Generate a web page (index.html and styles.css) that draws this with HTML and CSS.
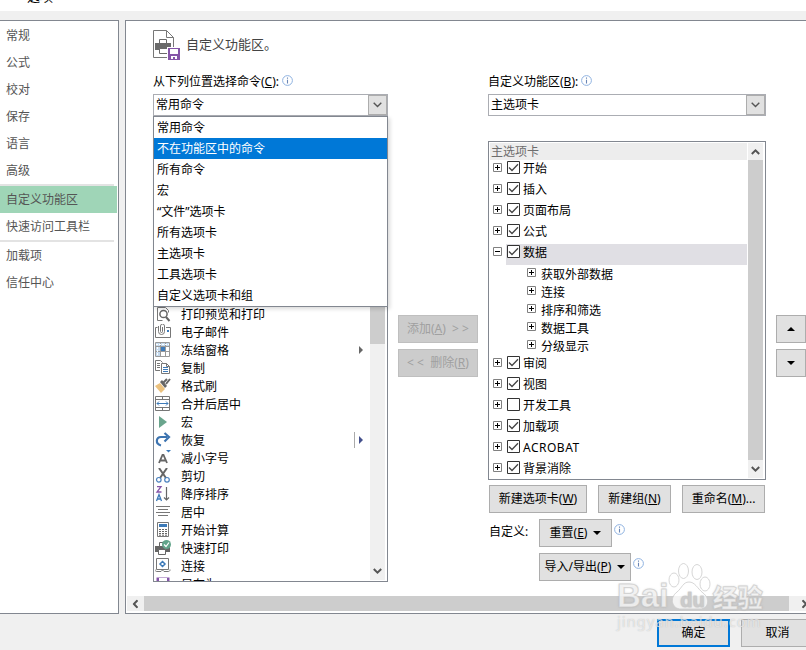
FILE: index.html
```html
<!DOCTYPE html>
<html lang="zh-CN">
<head>
    <meta charset="UTF-8">
    <title>Excel 选项</title>
    <link rel="stylesheet" href="styles.css">
</head>
<body>

    <!-- Shared symbols -->
    <svg class="symbols">
        <symbol id="info" viewBox="0 0 11 11">
            <circle cx="5.5" cy="5.5" r="4.9" fill="#fff" stroke="#8fb2e0"/>
            <path d="M5.5 2.5v1.2M5.5 4.7v3.8" stroke="#6a86b5" stroke-width="1.1"/>
        </symbol>
        <symbol id="chevron" viewBox="0 0 9 6">
            <path d="M.7.8l3.8 3.8L8.3.8" fill="none" stroke="#555" stroke-width="1.4"/>
        </symbol>
        <symbol id="scroll-arrow" viewBox="0 0 9 6">
            <path d="M.8 1l3.7 3.6L8.2 1" fill="none" stroke="#555" stroke-width="2"/>
        </symbol>
        <symbol id="plus" viewBox="0 0 9 9">
            <path d="M.5.5h8v8h-8z" fill="#fff" stroke="#808080"/>
            <path d="M2 4.5h5M4.5 2v5" stroke="#000"/>
        </symbol>
        <symbol id="minus" viewBox="0 0 9 9">
            <path d="M.5.5h8v8h-8z" fill="#fff" stroke="#808080"/>
            <path d="M2 4.5h5" stroke="#000"/>
        </symbol>
        <symbol id="checked" viewBox="0 0 13 13">
            <path d="M.5.5h12v12h-12z" fill="#fff" stroke="#333"/>
            <path d="M2 6.5l3 3L11 3.2" fill="none" stroke="#444" stroke-width="1.3"/>
        </symbol>
        <symbol id="unchecked" viewBox="0 0 13 13">
            <path d="M.5.5h12v12h-12z" fill="#fff" stroke="#333"/>
        </symbol>
    </svg>

    <div class="window">
        <div class="titlebar"><span>选项</span></div>

        <div class="content">
            <!-- Categories -->
            <div class="sidebar">
                <div class="nav">常规</div>
                <div class="nav">公式</div>
                <div class="nav">校对</div>
                <div class="nav">保存</div>
                <div class="nav">语言</div>
                <div class="nav">高级</div>
                <div class="separator"></div>
                <div class="nav active">自定义功能区</div>
                <div class="nav">快速访问工具栏</div>
                <div class="separator"></div>
                <div class="nav">加载项</div>
                <div class="nav">信任中心</div>
            </div>

            <div class="panel">
                <div class="heading">
                    <svg width="27" height="30" viewBox="0 0 27 30">
                        <path d="M.5.5h13l7 7v20H.5z" fill="#fff" stroke="#777"/>
                        <path d="M13.5.5v7h7" fill="none" stroke="#777"/>
                        <path d="M6.500 9.500h7v4h-7z" fill="#fff" stroke="#6a6a6a"/>
                        <path d="M2 13h16v7H2z" fill="#6a6a6a"/>
                        <path d="M6.500 18.500h8v5h-8z" fill="#fff" stroke="#6a6a6a"/>
                        <path d="M14 17h13v13H14z" fill="#fff"/>
                        <path d="M15 18h12v12H15z" fill="#8555a8"/>
                        <path d="M17 19h8v5h-8zM18 26h6v3h-2v-2h-2v2h-2z" fill="#fff"/>
                    </svg>
                    <span>自定义功能区。</span>
                </div>

                <div class="columns">
                    <!-- Commands to choose from -->
                    <div class="commands">
                        <div class="label">从下列位置选择命令(<u>C</u>):<svg class="info"><use href="#info"/></svg></div>
                        <div class="combo">
                            <span>常用命令</span>
                            <div class="combo-button"><svg width="9" height="6"><use href="#chevron"/></svg></div>
                            <div class="dropdown">
                                <div>常用命令</div>
                                <div class="selected">不在功能区中的命令</div>
                                <div>所有命令</div>
                                <div>宏</div>
                                <div>“文件”选项卡</div>
                                <div>所有选项卡</div>
                                <div>主选项卡</div>
                                <div>工具选项卡</div>
                                <div>自定义选项卡和组</div>
                            </div>
                        </div>
                        <div class="list">
                            <div class="list-rows">
                                <div class="command">
                                    <svg viewBox="0 0 16 16"><path d="M2.500 14.500V1.500h8l3 3v2M2.500 14.500h5" fill="none" stroke="#777"/><circle cx="8.500" cy="8" r="3.600" fill="#fff" stroke="#666" stroke-width="1.500"/><path d="M11 11l3.500 4" stroke="#666" stroke-width="2"/></svg>
                                    <span>打印预览和打印</span>
                                </div>
                                <div class="command">
                                    <svg viewBox="0 0 16 16"><path d="M2.500 3.500H.5v10h15v-10H11" fill="none" stroke="#777"/><path d="M3.500 2v5.500a3 3 0 006 0V2a2 2 0 00-4 0v5.500a1 1 0 002 0V3" fill="none" stroke="#777"/><path d="M12 6h2v2h-2z" fill="#3d7ab8"/></svg>
                                    <span>电子邮件</span>
                                </div>
                                <div class="command">
                                    <svg viewBox="0 0 16 16"><path d="M0 1h15v13H0z" fill="#c5daee"/><path d="M.5.5h14v14H.5zM.5 4.500h14M.5 9.500h14M5.500.5v14M10.500.5v14" fill="none" stroke="#999"/><path d="M1 2.500h13M2.500 5v9" stroke="#fff" stroke-dasharray="2 1"/><path d="M6 5h4v4H6z" fill="#3d7ab8"/><path d="M11 5h3v4h-3zM6 10h4v4H6zM11 10h3v4h-3z" fill="#fff"/></svg>
                                    <span>冻结窗格</span>
                                    <i class="submenu"></i>
                                </div>
                                <div class="command">
                                    <svg viewBox="0 0 16 16"><path d="M5 10.500H.5v-10h5l2 2M2 3.500h3M2 5.500h3M2 7.500h3" fill="none" stroke="#777"/><path d="M6.500 3.500h5l3 3v7h-8z" fill="#fff" stroke="#777"/><path d="M11.500 3.500v3h3" fill="none" stroke="#777"/><path d="M8 7.500h5M8 9.500h5M8 11.500h5" stroke="#3d7ab8"/></svg>
                                    <span>复制</span>
                                </div>
                                <div class="command">
                                    <svg viewBox="0 0 16 16"><path d="M0 8l5-3 5 6-4 4z" fill="#ecc27f"/><path d="M5 4l2-2 5 6-2 2z" fill="#666"/><path d="M8 5l4-4M11 6l4-5" stroke="#666" stroke-width="2"/></svg>
                                    <span>格式刷</span>
                                </div>
                                <div class="command">
                                    <svg viewBox="0 0 16 16"><path d="M.5.5h14v14H.5zM.5 3.500h14M.5 11.500h14M7.500.5v3M7.500 11.500v3" fill="none" stroke="#777"/><path d="M2 7.500h11M4 5.500l-2 2 2 2M11 5.500l2 2-2 2" fill="none" stroke="#3d7ab8"/></svg>
                                    <span>合并后居中</span>
                                </div>
                                <div class="command">
                                    <svg viewBox="0 0 16 16"><path d="M4 2l8 6-8 6z" fill="#6aa58d"/></svg>
                                    <span>宏</span>
                                </div>
                                <div class="command">
                                    <svg viewBox="0 0 16 16"><path d="M6 13.500C0 12 1 5 6 5h6" fill="none" stroke="#3d74b0" stroke-width="2.200"/><path d="M9.500 1L14 5l-4.500 4.500" fill="none" stroke="#3d74b0" stroke-width="2.200"/></svg>
                                    <span>恢复</span>
                                    <i class="submenu split"></i>
                                </div>
                                <div class="command">
                                    <svg viewBox="0 0 16 16"><path d="M4 13l3.500-8h1L12 13M5.500 10.500h5" fill="none" stroke="#666" stroke-width="1.800"/><path d="M11 0h5l-2.500 2.500z" fill="#3d7ab8"/></svg>
                                    <span>减小字号</span>
                                </div>
                                <div class="command">
                                    <svg viewBox="0 0 16 16"><path d="M4 0l7 10M12 0L5 10" stroke="#666" stroke-width="2"/><circle cx="3.800" cy="11.800" r="2.300" fill="none" stroke="#4b82bf" stroke-width="1.200"/><circle cx="12" cy="11.800" r="2.300" fill="none" stroke="#4b82bf" stroke-width="1.200"/></svg>
                                    <span>剪切</span>
                                </div>
                                <div class="command">
                                    <svg viewBox="0 0 16 16"><path d="M2 .700h4L2 6h4.500" fill="none" stroke="#8555a8" stroke-width="1.300"/><path d="M1.500 15L4 8.500 6.500 15M2.500 13h3" fill="none" stroke="#3d7ab8" stroke-width="1.300"/><path d="M11.500 1v13M9 11.500l2.500 2.500 2.500-2.500" fill="none" stroke="#666" stroke-width="1.200"/></svg>
                                    <span>降序排序</span>
                                </div>
                                <div class="command">
                                    <svg viewBox="0 0 16 16"><path d="M1 2.500h14M3 5.500h10M1 8.500h14M3 11.500h10" stroke="#777"/></svg>
                                    <span>居中</span>
                                </div>
                                <div class="command">
                                    <svg viewBox="0 0 16 16"><path d="M2.500.5h11v14h-11z" fill="#fff" stroke="#777"/><path d="M4 2h8v3H4z" fill="#3d7ab8"/><path d="M4 7.500h8M4 9.500h8M4 11.500h8M4 13.200h8" stroke="#666" stroke-dasharray="2 1"/></svg>
                                    <span>开始计算</span>
                                </div>
                                <div class="command">
                                    <svg viewBox="0 0 16 16"><path d="M4.500 2.500h6v4h-6z" fill="#fff" stroke="#666"/><path d="M0 6h15v6H0z" fill="#666"/><path d="M3.500 9.500h7v5h-7z" fill="#fff" stroke="#666"/><circle cx="11.500" cy="4.500" r="4.500" fill="#62a48a"/><path d="M9 4.500l2 2 3-4" fill="none" stroke="#fff" stroke-width="1.200"/></svg>
                                    <span>快速打印</span>
                                </div>
                                <div class="command">
                                    <svg viewBox="0 0 16 16"><path d="M1.500.5h12v11h-12z" fill="#fff" stroke="#777"/><path d="M7.500 3.500L10 6l-2.500 2.500L5 6z" fill="none" stroke="#3d7ab8" stroke-width="1.500"/><path d="M0 11.500c0 2 1 2 3 2h3l1.500-1.500L9 13.500h3c2 0 3 0 3-2" fill="none" stroke="#777"/></svg>
                                    <span>连接</span>
                                </div>
                                <div class="command">
                                    <svg viewBox="0 0 16 16"><path d="M1.500 1.500h13v13h-13z" fill="#8555a8"/><path d="M4 2h8v6H4z" fill="#fff"/></svg>
                                    <span>另存为</span>
                                </div>
                            </div>
                            <div class="scrollbar">
                                <div class="thumb"></div>
                                <svg width="9" height="6"><use href="#scroll-arrow"/></svg>
                            </div>
                        </div>
                    </div>

                    <div class="transfer">
                        <div class="button disabled">添加(<u>A</u>)&nbsp; &gt; &gt;</div>
                        <div class="button disabled">&lt; &lt;&nbsp; 删除(<u>R</u>)</div>
                    </div>

                    <!-- Ribbon tabs -->
                    <div class="ribbon">
                        <div class="label">自定义功能区(<u>B</u>):<svg class="info"><use href="#info"/></svg></div>
                        <div class="combo">
                            <span>主选项卡</span>
                            <div class="combo-button"><svg width="9" height="6"><use href="#chevron"/></svg></div>
                        </div>
                        <div class="tree">
                            <div class="tree-rows">
                                <div class="tree-header">主选项卡</div>
                                <div class="tab"><svg class="expander"><use href="#plus"/></svg><div><svg class="check"><use href="#checked"/></svg>开始</div></div>
                                <div class="tab"><svg class="expander"><use href="#plus"/></svg><div><svg class="check"><use href="#checked"/></svg>插入</div></div>
                                <div class="tab"><svg class="expander"><use href="#plus"/></svg><div><svg class="check"><use href="#checked"/></svg>页面布局</div></div>
                                <div class="tab"><svg class="expander"><use href="#plus"/></svg><div><svg class="check"><use href="#checked"/></svg>公式</div></div>
                                <div class="tab current"><svg class="expander"><use href="#minus"/></svg><div><svg class="check"><use href="#checked"/></svg>数据</div></div>
                                <div class="group"><svg class="expander"><use href="#plus"/></svg>获取外部数据</div>
                                <div class="group"><svg class="expander"><use href="#plus"/></svg>连接</div>
                                <div class="group"><svg class="expander"><use href="#plus"/></svg>排序和筛选</div>
                                <div class="group"><svg class="expander"><use href="#plus"/></svg>数据工具</div>
                                <div class="group"><svg class="expander"><use href="#plus"/></svg>分级显示</div>
                                <div class="tab"><svg class="expander"><use href="#plus"/></svg><div><svg class="check"><use href="#checked"/></svg>审阅</div></div>
                                <div class="tab"><svg class="expander"><use href="#plus"/></svg><div><svg class="check"><use href="#checked"/></svg>视图</div></div>
                                <div class="tab"><svg class="expander"><use href="#plus"/></svg><div><svg class="check"><use href="#unchecked"/></svg>开发工具</div></div>
                                <div class="tab"><svg class="expander"><use href="#plus"/></svg><div><svg class="check"><use href="#checked"/></svg>加载项</div></div>
                                <div class="tab latin"><svg class="expander"><use href="#plus"/></svg><div><svg class="check"><use href="#checked"/></svg>ACROBAT</div></div>
                                <div class="tab"><svg class="expander"><use href="#plus"/></svg><div><svg class="check"><use href="#checked"/></svg>背景消除</div></div>
                            </div>
                            <div class="scrollbar">
                                <svg class="up" width="9" height="6"><use href="#scroll-arrow"/></svg>
                                <div class="thumb"></div>
                                <svg width="9" height="6"><use href="#scroll-arrow"/></svg>
                            </div>
                        </div>
                        <div class="tab-buttons">
                            <div class="button">新建选项卡(<u>W</u>)</div>
                            <div class="button">新建组(<u>N</u>)</div>
                            <div class="button">重命名(<u>M</u>)...</div>
                        </div>
                        <div class="customize">
                            <span>自定义:</span>
                            <div class="button reset">重置(<u>E</u>)<i class="caret"></i></div>
                            <svg class="info"><use href="#info"/></svg>
                        </div>
                        <div class="customize">
                            <span></span>
                            <div class="button import">导入/导出(<u>P</u>)<i class="caret"></i></div>
                            <svg class="info"><use href="#info"/></svg>
                        </div>
                    </div>

                    <div class="order">
                        <div class="button"><i class="caret up-caret"></i></div>
                        <div class="button"><i class="caret"></i></div>
                    </div>
                </div>

                <div class="hscroll">
                    <svg class="left" width="9" height="6"><use href="#scroll-arrow"/></svg>
                    <div class="thumb"></div>
                    <svg class="right" width="9" height="6"><use href="#scroll-arrow"/></svg>
                </div>
            </div>
        </div>

        <div class="footer">
            <div class="button ok">确定</div>
            <div class="button">取消</div>
        </div>

        <!-- Watermark -->
        <div class="watermark">
            <svg width="46" height="48" viewBox="0 0 46 48">
                <g fill="#fff" fill-opacity=".75" stroke="#ccc" stroke-opacity=".8">
                    <ellipse cx="8" cy="17" rx="5" ry="7"/>
                    <ellipse cx="17.500" cy="8" rx="5" ry="7.500"/>
                    <ellipse cx="31" cy="9" rx="5" ry="7.500"/>
                    <ellipse cx="39" cy="21" rx="5" ry="7"/>
                    <path d="M23 19c-6 0-7 6-12 10-8 6-5 17 4 17h19c9 0 10-11 3-16-6-5-8-11-14-11z"/>
                </g>
            </svg>
            <div class="brand"><b>Bai</b><b class="du">du</b><b class="cn">经验</b></div>
            <div class="site">jingyan.baidu.com</div>
        </div>
    </div>

</body>
</html>
```

FILE: styles.css
```css
* {
    box-sizing: border-box;
}
body {
    margin: 0;
    font-family: "Noto Sans", "Noto Sans CJK SC", sans-serif;
    font-size: 12px;
    line-height: 18px;
    color: #000;
    overflow: hidden;
}
svg {
    display: block;
    flex: none;
}
.symbols {
    display: none;
}
.window {
    position: relative;
    width: 806px;
    height: 650px;
    background: #f0f0f0;
    overflow: hidden;
    white-space: nowrap;
}
.titlebar {
    display: flex;
    align-items: flex-end;
    height: 11px;
    padding: 0 0 6px 27px;
    background: #fff;
    font-size: 13px;
    overflow: hidden;
}
.content {
    display: flex;
    gap: 6px;
    height: 603px;
    padding-top: 9px;
}

/* Sidebar */
.sidebar {
    flex: none;
    width: 119px;
    padding-top: 1px;
    background: #fff;
    border: 1px solid #828790;
    border-left: none;
    color: #555;
}
.nav {
    height: 27px;
    margin-right: 1px;
    padding-left: 6px;
    line-height: 27px;
}
.nav.active {
    background: #9fd5b7;
}
.separator {
    height: 2px;
    margin-right: 4px;
    background: #e3e3e3;
}

/* Main panel */
.panel {
    flex: none;
    width: 690px;
    background: #fff;
    border: 1px solid #828790;
}
.heading {
    display: flex;
    height: 51px;
    padding: 9px 0 0 27px;
    gap: 6px;
    font-size: 13px;
    line-height: 29px;
    color: #444;
}
.columns {
    display: flex;
    height: 524px;
    padding-left: 27px;
}
.label {
    display: flex;
    height: 22px;
    line-height: 20px;
}
.info {
    width: 11px;
    height: 11px;
    margin: 3px 0 0 3px;
}
.combo {
    position: relative;
    display: flex;
    justify-content: space-between;
    height: 22px;
    padding-left: 2px;
    border: 1px solid #abadb3;
    line-height: 19px;
}
.combo-button {
    display: flex;
    align-items: center;
    justify-content: center;
    width: 19px;
    background: #e1e1e1;
    border: 1px solid #adadad;
}
.dropdown {
    position: absolute;
    z-index: 2;
    top: 21px;
    left: -1px;
    width: 235px;
    background: #fff;
    border: 1px solid #828790;
    box-shadow: 2px 2px 4px rgba(0, 0, 0, 0.15);
    line-height: 21px;
}
.dropdown div {
    height: 21px;
    padding-left: 3px;
}
.dropdown .selected {
    background: #0078d7;
    color: #fff;
}
.commands {
    width: 235px;
}
.list {
    display: flex;
    height: 441px;
    margin-top: 25px;
    border: 1px solid #828790;
}
.list-rows {
    flex: 1;
    padding: 163px 0 0 1px;
    overflow: hidden;
}
.command {
    display: flex;
    align-items: center;
    height: 18px;
}
.command span {
    padding-top: 2px;
}
.command svg {
    width: 16px;
    height: 16px;
    margin-right: 10px;
}
.submenu {
    display: flex;
    align-items: center;
    height: 16px;
    margin: 0 6px 0 auto;
    padding-left: 4px;
}
.submenu::after {
    content: "";
    border: 4px solid transparent;
    border-left-color: #666;
    border-right: none;
}
.submenu.split {
    border-left: 1px solid #aaa;
}
.submenu.split::after {
    border-left-color: #44508c;
}
.scrollbar {
    display: flex;
    flex-direction: column;
    justify-content: space-between;
    align-items: center;
    width: 15px;
    margin: 1px 2px 1px 1px;
    padding: 6px 0;
    background: #f0f0f0;
}
.scrollbar .thumb {
    width: 15px;
    background: #cdcdcd;
}
.commands .thumb {
    height: 195px;
}
.up {
    transform: rotate(180deg);
}

/* Buttons */
.button {
    display: flex;
    align-items: center;
    justify-content: center;
    height: 28px;
    background: #e1e1e1;
    border: 1px solid #adadad;
}
.button.disabled {
    background: #ccc;
    border-color: #bfbfbf;
    color: #a0a0a0;
}
.transfer {
    display: grid;
    align-content: start;
    gap: 6px;
    width: 80px;
    margin: 243px 10px 0;
}
.order {
    display: grid;
    align-content: start;
    gap: 6px;
    width: 30px;
    margin: 243px 0 0 10px;
}
.caret {
    border: 4px solid transparent;
    border-top-color: #000;
    border-bottom: none;
}
.up-caret {
    border: 4px solid transparent;
    border-bottom-color: #000;
    border-top: none;
}
.button u + .caret {
    margin-left: 6px;
}

/* Ribbon tree */
.ribbon {
    width: 278px;
}
.tree {
    display: flex;
    height: 339px;
    margin-top: 25px;
    border: 1px solid #828790;
}
.tree-rows {
    width: 259px;
    padding: 1px 1px 0 1px;
    overflow: hidden;
}
.tree-header {
    height: 17px;
    padding-left: 1px;
    background: #ededed;
    color: #6d6d6d;
    line-height: 18px;
}
.tab {
    display: flex;
    height: 21px;
    padding-left: 3px;
    line-height: 17px;
}
.tab.latin {
    letter-spacing: 0.5px;
}
.tab .expander {
    margin: 3px 4px 0 0;
}
.tab > div {
    display: flex;
    flex: 1;
    padding-left: 1px;
}
.tab.current > div {
    background: #e0dfe4;
}
.expander {
    width: 9px;
    height: 9px;
}
.check {
    width: 13px;
    height: 13px;
    margin: 1px 3px 0 0;
}
.group {
    display: flex;
    height: 18px;
    padding-left: 37px;
    line-height: 20px;
}
.group .expander {
    margin: 3px 5px 0 0;
}
.tree .scrollbar {
    margin-left: 0;
}
.tree .thumb {
    flex: 1;
    margin: 5px 0 6px;
}
.tab-buttons {
    display: grid;
    grid-template-columns: 98px 73px 83px;
    gap: 11px;
    margin: 5px 0 0 1px;
}
.customize {
    display: flex;
    margin: 6px 0 0 1px;
}
.customize span {
    width: 50px;
    line-height: 25px;
}
.customize .info {
    margin: 5px 0 0 2px;
}
.reset {
    width: 73px;
}
.import {
    width: 92px;
}

/* Horizontal scrollbar */
.hscroll {
    display: flex;
    align-items: center;
    height: 15px;
    margin-left: 1px;
    background: #f0f0f0;
}
.hscroll .thumb {
    width: 645px;
    height: 15px;
    background: #cdcdcd;
}
.hscroll svg {
    margin: 0 4px;
}
.left {
    transform: rotate(90deg);
}
.hscroll .right {
    margin-left: 11px;
    transform: rotate(-90deg);
}

/* Footer */
.footer {
    display: flex;
    gap: 11px;
    padding: 5px 0 0 657px;
}
.footer .button {
    flex: none;
    width: 73px;
}
.footer .ok {
    border: 2px solid #0078d7;
}

/* Watermark */
.watermark {
    position: absolute;
    z-index: 3;
    left: 617px;
    top: 563px;
    width: 150px;
    height: 70px;
    color: rgba(255, 255, 255, 0.8);
    text-shadow: 0 0 2px rgba(130, 130, 130, 0.5);
}
.watermark svg {
    position: absolute;
    left: 49px;
    top: 0;
}
.brand {
    position: relative;
    display: flex;
    align-items: baseline;
    padding-top: 17px;
    font: bold 33px/32px "Liberation Sans", "Noto Sans CJK SC", sans-serif;
    -webkit-text-stroke: 1px rgba(200, 200, 200, 0.7);
}
.brand .du {
    margin-left: 12px;
    font-size: 20px;
    color: #ccc;
}
.brand .cn {
    margin-left: 8px;
    font-size: 25px;
}
.site {
    margin-top: -4px;
    color: rgba(255, 255, 255, 0.6);
    font-size: 15px;
    letter-spacing: 0.85px;
    text-shadow: 0 0 1px rgba(130, 130, 130, 0.5);
}
```
